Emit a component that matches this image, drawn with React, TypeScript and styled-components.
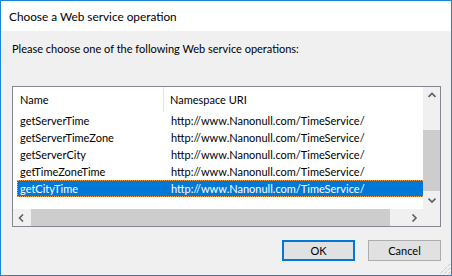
import styled, { createGlobalStyle } from "styled-components";

const GlobalStyle = createGlobalStyle`
  html, body {
    margin: 0;
    padding: 0;
    background: #ffffff;
  }
  * {
    box-sizing: border-box;
  }
`;

const Window = styled.div`
  position: relative;
  width: 452px;
  height: 276px;
  border: 1px solid #1883d7;
  background: #f0f0f0;
  display: flex;
  flex-direction: column;
  font-family: Lato, "Liberation Sans", sans-serif;
  font-size: 11px;
  color: #000;
`;

const TitleBar = styled.div`
  height: 30px;
  background: #fff;
  display: flex;
  align-items: center;
  padding-left: 8px;
  font-size: 11.8px;
`;

const Body = styled.div`
  flex: 1;
  display: flex;
  flex-direction: column;
  padding: 10px 10px 0 11px;
`;

const Prompt = styled.div`
  line-height: 16px;
`;

const ListBox = styled.div`
  margin-top: 29px;
  height: 141px;
  border: 1px solid #828790;
  background: #fff;
  display: grid;
  grid-template-columns: 1fr 17px;
  grid-template-rows: 1fr 17px;
`;

const View = styled.div`
  overflow: hidden;
  padding-left: 4px;
`;

const Header = styled.div`
  display: flex;
  height: 25px;
  width: 420px;
`;

const HeadCell = styled.div<{ $w?: number; $pad: number; $sep?: boolean }>`
  display: flex;
  align-items: center;
  width: ${(p) => (p.$w ? `${p.$w}px` : "auto")};
  flex: ${(p) => (p.$w ? "none" : "1")};
  padding-left: ${(p) => p.$pad}px;
  border-right: ${(p) => (p.$sep ? "1px solid #e5e5e5" : "none")};
  white-space: nowrap;
`;

const Row = styled.div<{ $selected?: boolean }>`
  display: flex;
  height: 17px;
  width: 420px;
  align-items: center;
  background: ${(p) => (p.$selected ? "#0078d7" : "transparent")};
  color: ${(p) => (p.$selected ? "#fff" : "#000")};
  outline: ${(p) => (p.$selected ? "1px dotted #f5a04a" : "none")};
  outline-offset: -1px;
`;

const Cell = styled.div<{ $w?: number; $pad: number }>`
  width: ${(p) => (p.$w ? `${p.$w}px` : "auto")};
  flex: ${(p) => (p.$w ? "none" : "1")};
  padding-left: ${(p) => p.$pad}px;
  white-space: nowrap;
`;

const VScroll = styled.div`
  background: #f0f0f0;
  display: flex;
  flex-direction: column;
`;

const HScroll = styled.div`
  background: #f0f0f0;
  display: flex;
`;

const Corner = styled.div`
  background: #f0f0f0;
`;

const ArrowBtn = styled.div`
  width: 17px;
  height: 17px;
  flex: none;
  display: flex;
  align-items: center;
  justify-content: center;
`;

const Track = styled.div<{ $dir: "v" | "h" }>`
  flex: 1;
  display: flex;
  flex-direction: ${(p) => (p.$dir === "v" ? "column" : "row")};
`;

const Thumb = styled.div`
  background: #cdcdcd;
  flex: none;
`;

const Buttons = styled.div`
  margin-top: 13px;
  display: flex;
  justify-content: flex-end;
  gap: 13px;
`;

const Button = styled.button<{ $default?: boolean }>`
  width: 73px;
  height: 21px;
  padding: 0;
  font-family: inherit;
  font-size: 11px;
  color: #000;
  background: #e1e1e1;
  border: ${(p) => (p.$default ? "2px solid #0078d7" : "1px solid #adadad")};
`;

const Grip = styled.svg`
  position: absolute;
  right: 0;
  bottom: 0;
`;

type Dir = "up" | "down" | "left" | "right";

const Chevron = ({ dir }: { dir: Dir }) => {
  const pts: Record<Dir, string> = {
    up: "0.5,5 4,1.5 7.5,5",
    down: "0.5,1.5 4,5 7.5,1.5",
    left: "5,0.5 1.5,4 5,7.5",
    right: "1.5,0.5 5,4 1.5,7.5",
  };
  const vertical = dir === "up" || dir === "down";
  return (
    <svg width={vertical ? 8 : 7} height={vertical ? 7 : 8}>
      <polyline points={pts[dir]} fill="none" stroke="#606060" strokeWidth="1.6" />
    </svg>
  );
};

const operations = [
  "getServerTime",
  "getServerTimeZone",
  "getServerCity",
  "getTimeZoneTime",
  "getCityTime",
];

const uri = "http://www.Nanonull.com/TimeService/";

export default function App() {
  const selected = 4;
  return (
    <Window>
      <GlobalStyle />
      <TitleBar>Choose a Web service operation</TitleBar>
      <Body>
        <Prompt>Please choose one of the following Web service operations:</Prompt>
        <ListBox>
          <View>
            <Header>
              <HeadCell $w={147} $pad={3} $sep>Name</HeadCell>
              <HeadCell $pad={6}>Namespace URI</HeadCell>
            </Header>
            {operations.map((op, i) => (
              <Row key={op} $selected={i === selected}>
                <Cell $w={147} $pad={3}>{op}</Cell>
                <Cell $pad={7}>{uri}</Cell>
              </Row>
            ))}
          </View>
          <VScroll>
            <ArrowBtn><Chevron dir="up" /></ArrowBtn>
            <Track $dir="v">
              <Thumb style={{ marginTop: 26, height: 61 }} />
            </Track>
            <ArrowBtn><Chevron dir="down" /></ArrowBtn>
          </VScroll>
          <HScroll>
            <ArrowBtn><Chevron dir="left" /></ArrowBtn>
            <Track $dir="h">
              <Thumb style={{ marginLeft: 1, width: 359 }} />
            </Track>
            <ArrowBtn><Chevron dir="right" /></ArrowBtn>
          </HScroll>
          <Corner />
        </ListBox>
        <Buttons>
          <Button $default>OK</Button>
          <Button>Cancel</Button>
        </Buttons>
      </Body>
      <Grip width="12" height="12" viewBox="0 0 12 12">
        <g stroke="#b4b4b4" strokeWidth="1" strokeDasharray="1 1">
          <line x1="11" y1="1" x2="1" y2="11" />
          <line x1="11" y1="5" x2="5" y2="11" />
          <line x1="11" y1="9" x2="9" y2="11" />
        </g>
      </Grip>
    </Window>
  );
}
